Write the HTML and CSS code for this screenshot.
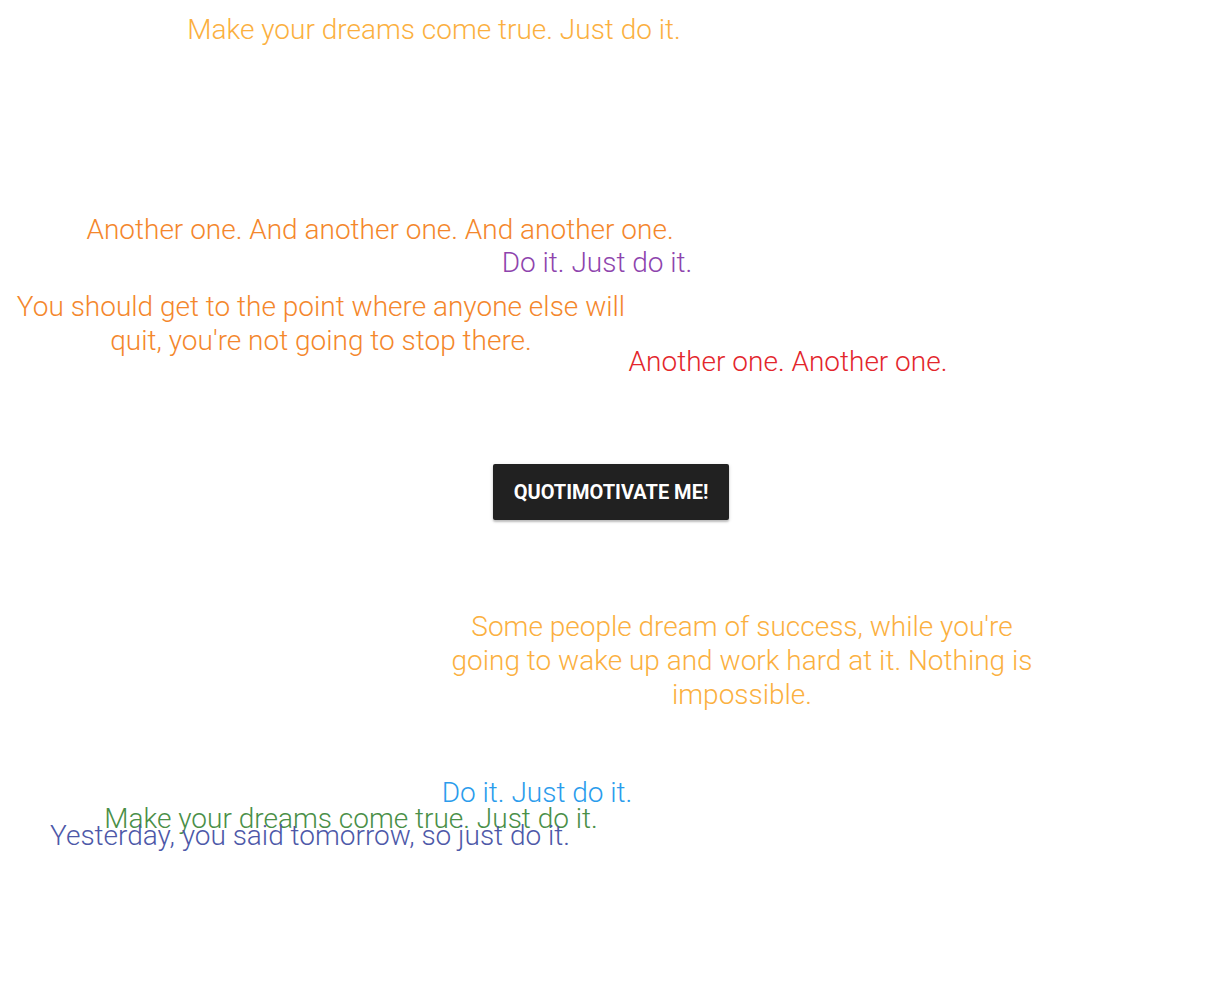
FILE: index.html
```html
<!DOCTYPE html>
<html lang="en">
<head>
<meta charset="utf-8">
<title>Quotimotivate</title>
<link rel="stylesheet" href="styles.css">
</head>
<body>
<main class="stage">
  <p class="quote c-amber" style="left:434px;top:13px">Make your dreams come true. Just do it.</p>
  <p class="quote c-orange" style="left:380px;top:213px">Another one. And another one. And another one.</p>
  <p class="quote c-purple" style="left:597px;top:246px">Do it. Just do it.</p>
  <p class="quote wrap c-orange" style="left:321px;top:290px;width:630px">You should get to the point where anyone else will quit, you're not going to stop there.</p>
  <p class="quote c-red" style="left:788px;top:345px">Another one. Another one.</p>
  <div class="action">
    <button class="btn" type="button">Quotimotivate me!</button>
  </div>
  <p class="quote wrap c-amber" style="left:742px;top:610px;width:590px">Some people dream of success, while you're going to wake up and work hard at it. Nothing is impossible.</p>
  <p class="quote c-blue" style="left:537px;top:776px">Do it. Just do it.</p>
  <p class="quote c-green" style="left:351px;top:802px">Make your dreams come true. Just do it.</p>
  <p class="quote c-indigo" style="left:310px;top:819px">Yesterday, you said tomorrow, so just do it.</p>
</main>
</body>
</html>
```
FILE: styles.css
```css
html, body {
  margin: 0;
  padding: 0;
  background: #ffffff;
}
body {
  font-family: Roboto, "Liberation Sans", Arial, sans-serif;
}
.stage {
  position: relative;
  width: 1224px;
  height: 983px;
  overflow: hidden;
}
.quote {
  position: absolute;
  margin: 0;
  font-weight: 300;
  font-size: 28px;
  line-height: 34px;
  text-align: center;
  white-space: nowrap;
  transform: translateX(-50%);
}
.quote.wrap {
  white-space: normal;
}
.c-amber { color: #fbb040; }
.c-orange { color: #f4872c; }
.c-purple { color: #8e44ad; }
.c-red { color: #e3262c; }
.c-blue { color: #2b9cec; }
.c-green { color: #4a8f47; }
.c-indigo { color: #4d58a8; }
.action {
  display: flex;
  justify-content: center;
  padding-top: 464px;
  padding-right: 2px;
}
.btn {
  width: 236px;
  height: 56px;
  padding: 0;
  background: #212121;
  color: #ffffff;
  border: none;
  border-radius: 2px;
  font-family: Roboto, "Liberation Sans", Arial, sans-serif;
  font-weight: 700;
  font-size: 20px;
  text-transform: uppercase;
  box-shadow: 0 2px 2px rgba(0,0,0,0.2), 0 1px 4px rgba(0,0,0,0.12);
  cursor: pointer;
}
```
